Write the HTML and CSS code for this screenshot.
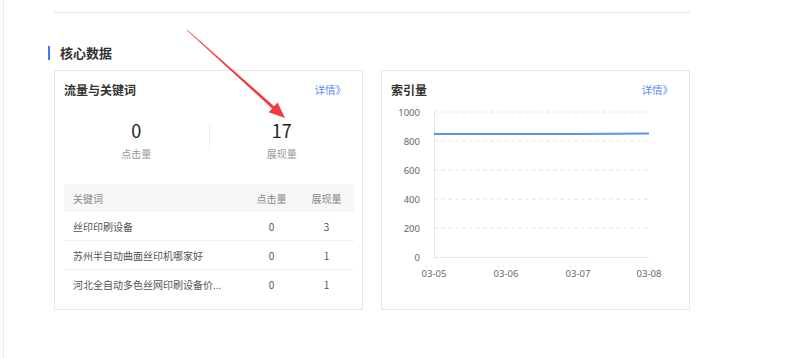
FILE: index.html
```html
<!DOCTYPE html>
<html lang="zh-CN">
<head>
    <meta charset="UTF-8">
    <meta name="viewport" content="width=device-width, initial-scale=1.0">
    <title>核心数据</title>
    <link rel="stylesheet" href="styles.css">
</head>
<body>

    <div class="page">
        <div class="top-line"></div>

        <h2 class="section-title">核心数据</h2>

        <div class="cards">
            <!-- 流量与关键词 -->
            <div class="card">
                <div class="card-head">
                    <span class="card-title">流量与关键词</span>
                    <a class="more" href="#">详情》</a>
                </div>

                <div class="stats">
                    <div class="stat">
                        <div class="stat-num">0</div>
                        <div class="stat-label">点击量</div>
                    </div>
                    <div class="stat-divider"></div>
                    <div class="stat">
                        <div class="stat-num">17</div>
                        <div class="stat-label">展现量</div>
                    </div>
                </div>

                <table class="kw-table">
                    <thead>
                        <tr>
                            <th class="kw">关键词</th>
                            <th>点击量</th>
                            <th>展现量</th>
                        </tr>
                    </thead>
                    <tbody>
                        <tr>
                            <td class="kw">丝印印刷设备</td>
                            <td>0</td>
                            <td>3</td>
                        </tr>
                        <tr>
                            <td class="kw">苏州半自动曲面丝印机哪家好</td>
                            <td>0</td>
                            <td>1</td>
                        </tr>
                        <tr>
                            <td class="kw">河北全自动多色丝网印刷设备价...</td>
                            <td>0</td>
                            <td>1</td>
                        </tr>
                    </tbody>
                </table>
            </div>

            <!-- 索引量 -->
            <div class="card">
                <div class="card-head">
                    <span class="card-title">索引量</span>
                    <a class="more" href="#">详情》</a>
                </div>

                <svg class="chart" width="307" height="180" viewBox="0 0 307 180">
                    <g class="grid">
                        <line x1="52" y1="5" x2="267" y2="5"/>
                        <line x1="52" y1="34" x2="267" y2="34"/>
                        <line x1="52" y1="63" x2="267" y2="63"/>
                        <line x1="52" y1="92" x2="267" y2="92"/>
                        <line x1="52" y1="121" x2="267" y2="121"/>
                    </g>
                    <line class="axis" x1="52.5" y1="5" x2="52.5" y2="150"/>
                    <line class="axis" x1="52" y1="150.5" x2="267" y2="150.5"/>

                    <g class="y-labels">
                        <text x="38" y="9">1000</text>
                        <text x="38" y="38">800</text>
                        <text x="38" y="67">600</text>
                        <text x="38" y="96">400</text>
                        <text x="38" y="125">200</text>
                        <text x="38" y="154">0</text>
                    </g>
                    <g class="x-labels">
                        <text x="52" y="170">03-05</text>
                        <text x="124" y="170">03-06</text>
                        <text x="196" y="170">03-07</text>
                        <text x="267" y="170">03-08</text>
                    </g>

                    <polyline class="series" points="52,27 124,27 196,27 267,26.6"/>
                </svg>
            </div>
        </div>
    </div>

    <!-- 标注箭头 -->
    <svg class="arrow" width="799" height="358" viewBox="0 0 799 358">
        <polygon points="187.2,29.8 274.1,106.2 277.6,102.4 285,118 268.7,112.2 272.1,108.4 186.8,30.2"/>
    </svg>

</body>
</html>
```

FILE: styles.css
```css
body {
    margin: 0;
    font-family: "Noto Sans CJK SC", "Noto Sans", sans-serif;
    background-color: #fff;
    color: #333;
}

.page {
    margin-left: 3px;
    min-height: 358px;
    border-left: 1px solid #ebebeb;
    padding-left: 50px;
    box-sizing: border-box;
}

.top-line {
    width: 636px;
    padding-top: 12px;
    border-bottom: 1px solid #e6e6e6;
}

.section-title {
    margin: 33px 0 0 -6px;
    padding-left: 10px;
    height: 14px;
    line-height: 14px;
    font-size: 13px;
    font-weight: bold;
    color: #333;
    border-left: 2px solid #3e7cf3;
}

.cards {
    display: flex;
    gap: 18px;
    margin-top: 10px;
}

.card {
    width: 309px;
    height: 240px;
    border: 1px solid #e8e8e8;
    box-sizing: border-box;
}

.card-head {
    display: flex;
    justify-content: space-between;
    align-items: center;
    height: 36px;
    padding: 0 16px 0 9px;
}

.card-title {
    font-size: 12px;
    font-weight: 600;
    color: #333;
}

.more {
    font-size: 10.5px;
    color: #5b8af5;
    text-decoration: none;
}

.stats {
    display: flex;
    margin: 11px 8px 0 9px;
}

.stat {
    flex: 1;
    text-align: center;
}

.stat-divider {
    width: 1px;
    height: 25px;
    margin-top: 7px;
    background-color: #eee;
}

.stat-num {
    font-size: 18px;
    line-height: 24px;
    color: #222;
}

.stat-label {
    margin-top: 4px;
    font-size: 10px;
    line-height: 16px;
    color: #999;
}

.kw-table {
    width: 290px;
    margin: 22px 0 0 9px;
    border-collapse: collapse;
    font-size: 10px;
    color: #555;
}

.kw-table th,
.kw-table td {
    height: 28px;
    padding: 0;
    text-align: center;
    font-weight: normal;
}

.kw-table th {
    background-color: #f7f7f7;
    color: #888;
}

.kw-table td {
    border-bottom: 1px solid #f0f0f0;
}

.kw-table tr:last-child td {
    border-bottom: none;
}

.kw-table .kw {
    text-align: left;
    padding-left: 9px;
    width: 171px;
}

.kw-table th:nth-child(2),
.kw-table td:nth-child(2) {
    width: 55px;
}

.chart {
    display: block;
}

.chart .grid line {
    stroke: #e4e4e4;
    stroke-width: 1;
    stroke-dasharray: 4 3;
}

.chart .axis {
    stroke: #e8e8e8;
    stroke-width: 1;
}

.chart text {
    font-family: "Noto Sans", sans-serif;
    font-size: 9.5px;
    fill: #666;
}

.chart .y-labels text {
    text-anchor: end;
}

.chart .x-labels text {
    text-anchor: middle;
}

.chart .series {
    fill: none;
    stroke: #5b8ff9;
    stroke-width: 2;
}

.arrow {
    position: absolute;
    top: 0;
    left: 0;
    pointer-events: none;
}

.arrow polygon {
    fill: #f23b3b;
}
```
